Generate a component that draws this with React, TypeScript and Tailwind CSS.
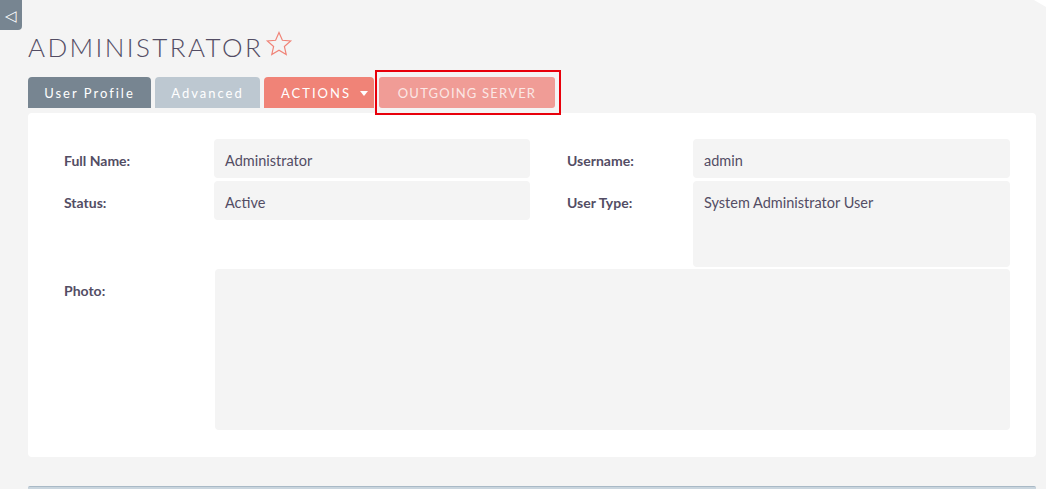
import type { JSX } from 'react';

// Detail view of the admin user record (SuiteP-like styling)

interface FieldProps {
  label: string;
  value?: string;
  tall?: boolean;
  labelWidth: string;
  valueWidth: string;
}

function Field({ label, value, tall, labelWidth, valueWidth }: FieldProps): JSX.Element {
  return (
    <div className="flex">
      <div className={labelWidth + ' pt-[11px] text-[14px] font-bold text-[#534d64]'}>{label}</div>
      <div
        className={
          valueWidth +
          ' rounded-[4px] bg-[#f4f4f4] px-[11px] pt-[14px] text-[14.5px] leading-[16px] text-[#534d64] ' +
          (tall ? 'h-[86px]' : 'h-[39px]')
        }
      >
        {value}
      </div>
    </div>
  );
}

export default function App(): JSX.Element {
  return (
    <div
      className="relative min-h-[489px] overflow-hidden bg-[#f4f4f4]"
      style={{ fontFamily: 'Lato, "Open Sans", sans-serif' }}
    >
      {/* sidebar toggle */}
      <button
        type="button"
        className="absolute left-0 top-0 flex h-[30px] w-[22px] items-center justify-center rounded-br-[4px] bg-[#778591] text-[15px] leading-none text-white"
      >
        ◁
      </button>
      {/* corner marker */}
      <div className="absolute right-0 top-0 h-0 w-0 border-l-[12px] border-r-0 border-t-[7px] border-l-transparent border-t-white" />

      <div className="pl-[28px] pr-[10px] pt-[31px]">
        <div className="flex items-start">
          <h1 className="text-[26px] font-light leading-[32px] tracking-[2.4px] text-[#534d64]">ADMINISTRATOR</h1>
          <svg width="28" height="28" viewBox="0 0 24 24" className="ml-[2px] -mt-[1px]">
            <path
              d="M12 2.2l2.9 6.6 7.1.6-5.4 4.7 1.6 7-6.2-3.7-6.2 3.7 1.6-7L2 9.4l7.1-.6z"
              fill="none"
              stroke="#f08377"
              strokeWidth="1"
              strokeLinejoin="miter"
            />
          </svg>
        </div>

        {/* tabs */}
        <div className="mt-[14px] flex items-end gap-[4px]">
          <div className="flex h-[31px] w-[123px] items-center justify-center rounded-t-[4px] bg-[#778591] pt-[2px] text-[13px] tracking-[2px] text-white">
            User Profile
          </div>
          <div className="flex h-[31px] w-[105px] items-center justify-center rounded-t-[4px] bg-[#bdc8d1] pt-[2px] text-[13px] tracking-[2px] text-white">
            Advanced
          </div>
          <div className="flex h-[31px] w-[110px] items-center gap-[9px] rounded-t-[4px] bg-[#f08377] pl-[17px] pt-[2px] text-[13px] tracking-[2px] text-white">
            <span>ACTIONS</span>
            <span className="h-0 w-0 border-x-[4px] border-t-[5px] border-x-transparent border-t-white" />
          </div>
          <div className="relative ml-[1px]">
            <div className="flex h-[31px] w-[176px] items-center justify-center rounded-[3px] bg-[#f09c96] pt-[2px] text-[13px] tracking-[1.2px] text-[#fbe7e5]">
              OUTGOING SERVER
            </div>
            <div className="pointer-events-none absolute -bottom-[7px] -left-[4px] -right-[6px] -top-[7px] border-2 border-[#e8000b]" />
          </div>
        </div>

        {/* detail panel */}
        <div className="mt-[5px] rounded-[4px] bg-white pb-[27px] pl-[36px] pr-[26px] pt-[26px]">
          <div className="flex justify-between">
            <div className="flex flex-col gap-[3px]">
              <Field label="Full Name:" value="Administrator" labelWidth="w-[150px]" valueWidth="w-[316px]" />
              <Field label="Status:" value="Active" labelWidth="w-[150px]" valueWidth="w-[316px]" />
            </div>
            <div className="flex flex-col gap-[3px]">
              <Field label="Username:" value="admin" labelWidth="w-[126px]" valueWidth="w-[317px]" />
              <Field label="User Type:" value="System Administrator User" tall labelWidth="w-[126px]" valueWidth="w-[317px]" />
            </div>
          </div>
          <div className="mt-[2px] flex">
            <div className="w-[151px] pt-[11px] text-[14px] font-bold text-[#534d64]">Photo:</div>
            <div className="h-[161px] flex-1 rounded-[4px] bg-[#f4f4f4]" />
          </div>
        </div>

        {/* next panel edge */}
        <div className="mt-[29px] h-[10px] rounded-t-[2px] border-t border-[#a9b9c6] bg-[#c9d5de]" />
      </div>
    </div>
  );
}
